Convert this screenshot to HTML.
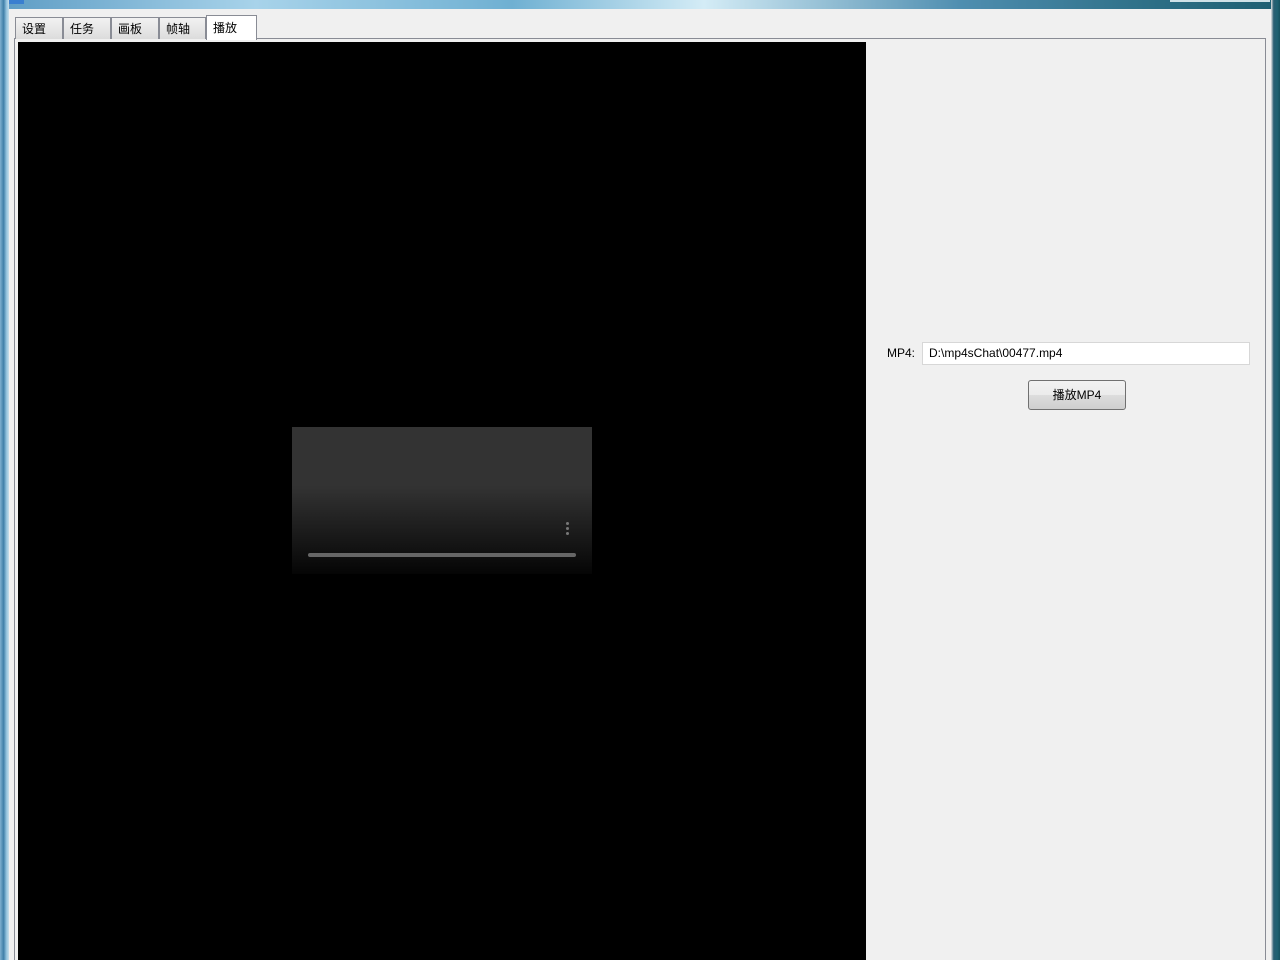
<!DOCTYPE html>
<html><head><meta charset="utf-8"><style>
*{margin:0;padding:0;box-sizing:border-box}
html,body{width:1280px;height:960px;overflow:hidden}
body{position:relative;background:#f0f0f0;font-family:"Liberation Sans","Noto Sans CJK SC",sans-serif;font-size:12px}
.abs{position:absolute}
.tab{position:absolute;top:17px;height:22px;border:1px solid #898c95;border-bottom:none;background:linear-gradient(#f2f2f2,#dcdcdc);padding:2px 0 0 6px;color:#000;font-size:12px}
</style></head><body>
<div class="abs" style="left:0;top:0;width:1280px;height:9px;background:linear-gradient(90deg,#5d9cc4,#a8d3ea 20%,#6fb0d2 40%,#d4ecf6 55%,#4f8eb0 75%,#2d6f86 90%,#1d5f72)"></div>
<div class="abs" style="left:8px;top:0;width:16px;height:4px;background:#3a7fd0"></div>
<div class="abs" style="left:0;top:0;width:9px;height:960px;background:linear-gradient(90deg,#7fb0cf,#3f7fa8 40%,#8fc0dc 70%,#c8dfeb)"></div>
<div class="abs" style="left:1271px;top:0;width:9px;height:960px;background:linear-gradient(90deg,#e4e4e4,#2a5e72 30%,#1e6272 70%,#17505e)"></div>
<div class="abs" style="left:1170px;top:0;width:100px;height:2px;background:#cfe2e8"></div>
<div class="abs" style="left:9px;top:9px;width:1262px;height:951px;background:#f0f0f0"></div>
<div class="abs" style="left:14px;top:38px;width:1252px;height:922px;border:1px solid #898c95;border-bottom:none;background:#f0f0f0"></div>
<div class="tab" style="left:15px;width:48px">设置</div>
<div class="tab" style="left:63px;width:48px">任务</div>
<div class="tab" style="left:111px;width:48px">画板</div>
<div class="tab" style="left:159px;width:47px">帧轴</div>
<div class="tab" style="left:206px;top:15px;height:25px;width:51px;background:#fff;padding-top:3px">播放</div>
<div class="abs" style="left:18px;top:42px;width:848px;height:918px;background:#000"></div>
<div class="abs" style="left:292px;top:427px;width:300px;height:147px;background:linear-gradient(#333 0,#333 40%,#111 85%,#050505)"></div>
<div class="abs" style="left:308px;top:553px;width:268px;height:4px;border-radius:2px;background:#666"></div>
<div class="abs" style="left:566px;top:522px;width:3px;height:3px;border-radius:50%;background:#777"></div>
<div class="abs" style="left:566px;top:527px;width:3px;height:3px;border-radius:50%;background:#777"></div>
<div class="abs" style="left:566px;top:532px;width:3px;height:3px;border-radius:50%;background:#777"></div>
<div class="abs" style="left:887px;top:346px">MP4:</div>
<div class="abs" style="left:922px;top:342px;width:328px;height:23px;background:#fff;border:1px solid #d7d7d7;padding:3px 0 0 6px">D:\mp4sChat\00477.mp4</div>
<div class="abs" style="left:1028px;top:380px;width:98px;height:30px;border:1px solid #707070;border-radius:3px;background:linear-gradient(#f2f2f2 0,#ebebeb 50%,#dcdcdc 51%,#cfcfcf);text-align:center;line-height:28px">播放MP4</div>
</body></html>
